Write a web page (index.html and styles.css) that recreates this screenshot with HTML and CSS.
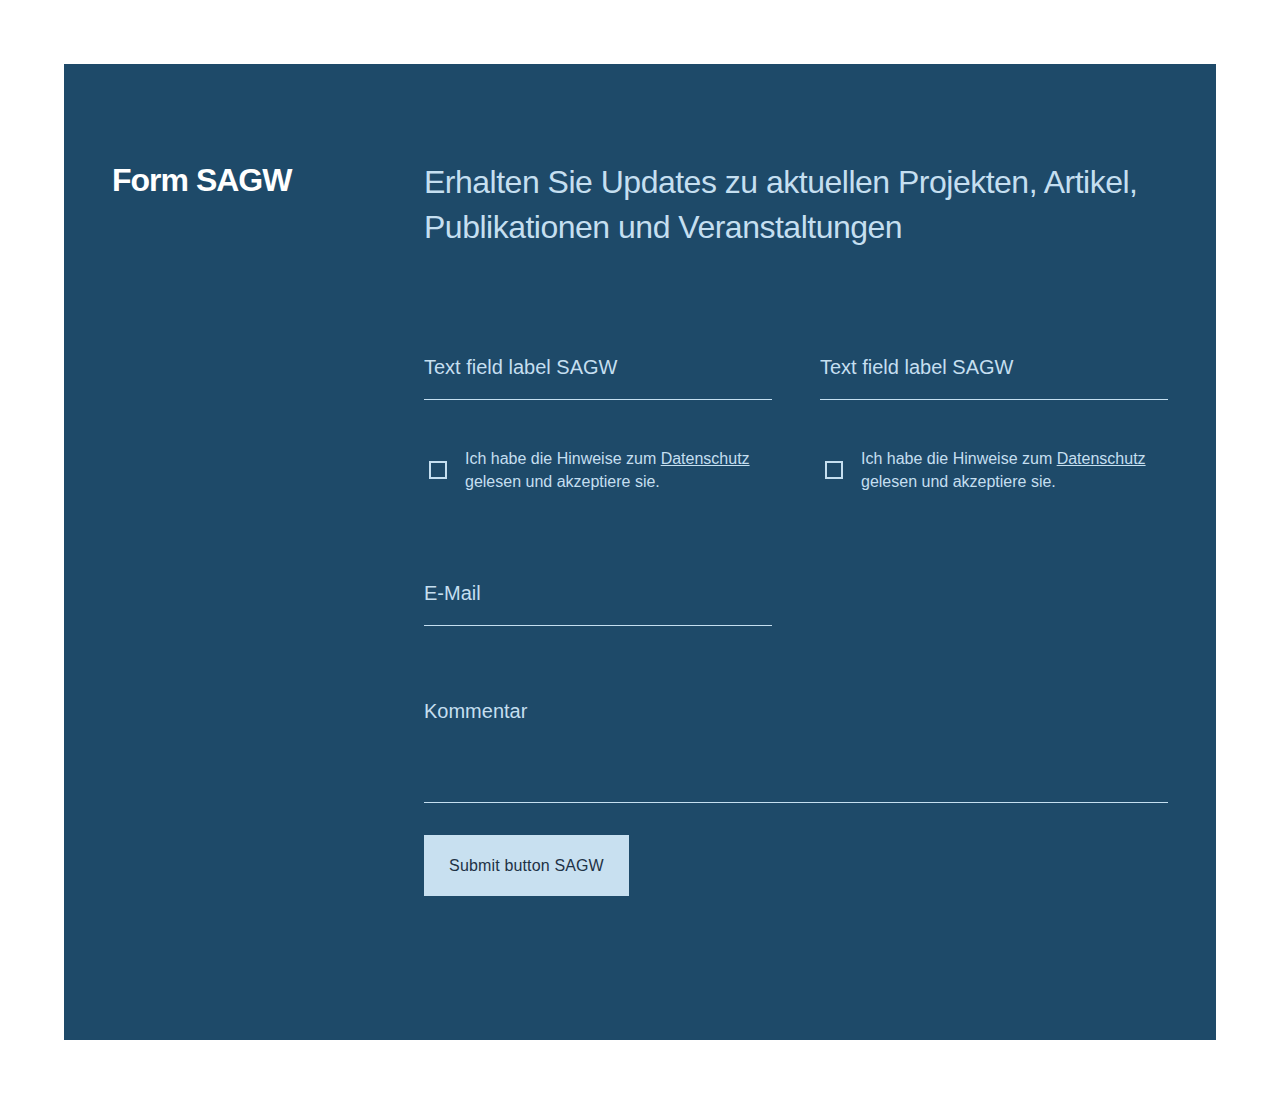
FILE: index.html
```html
<!DOCTYPE html>
<html lang="de">
<head>
<meta charset="utf-8">
<title>Form SAGW</title>
<link rel="stylesheet" href="styles.css">
</head>
<body>
<section class="panel">
  <h2 class="title">Form SAGW</h2>
  <div class="content">
    <p class="lead">Erhalten Sie Updates zu aktuellen Projekten, Artikel, Publikationen und Veranstaltungen</p>
    <form class="form">
      <div class="row two">
        <input class="field" type="text" placeholder="Text field label SAGW">
        <input class="field" type="text" placeholder="Text field label SAGW">
      </div>
      <div class="row two checks">
        <label class="check"><span class="box"></span><span class="check-text">Ich habe die Hinweise zum <a href="#">Datenschutz</a> gelesen und akzeptiere sie.</span></label>
        <label class="check"><span class="box"></span><span class="check-text">Ich habe die Hinweise zum <a href="#">Datenschutz</a> gelesen und akzeptiere sie.</span></label>
      </div>
      <div class="row two email">
        <input class="field" type="email" placeholder="E-Mail">
      </div>
      <textarea class="field area" placeholder="Kommentar"></textarea>
      <button class="submit" type="button">Submit button SAGW</button>
    </form>
  </div>
</section>
</body>
</html>
```
FILE: styles.css
```css
* { box-sizing: border-box; }
html, body { margin: 0; padding: 0; background: #ffffff; }
body { padding: 64px; font-family: "Liberation Sans", Arial, sans-serif; }

.panel {
  background: #1e4a69;
  padding: 96px 48px 144px;
  display: grid;
  grid-template-columns: 264px 1fr;
  column-gap: 48px;
  height: 976px;
}

.title {
  margin: 0;
  color: #ffffff;
  font-size: 32px;
  line-height: 40px;
  font-weight: 700;
  letter-spacing: -1px;
}

.lead {
  margin: 0;
  color: #c5dff0;
  font-size: 32px;
  line-height: 45px;
  font-weight: 400;
  letter-spacing: -0.5px;
}

.form { margin-top: 105px; display: flex; flex-direction: column; }

.row.two {
  display: grid;
  grid-template-columns: 1fr 1fr;
  column-gap: 48px;
}

.field {
  display: block;
  width: 100%;
  background: transparent;
  border: none;
  border-bottom: 1px solid #c5dff0;
  border-radius: 0;
  padding: 0 0 20px;
  margin: 0;
  font-family: "Liberation Sans", Arial, sans-serif;
  font-size: 20px;
  line-height: 24px;
  color: #c5dff0;
  outline: none;
}
.field::placeholder { color: #c5dff0; opacity: 1; }

.checks { margin-top: 47px; }

.check {
  display: flex;
  align-items: center;
  gap: 18px;
  padding-left: 5px;
  color: #c5dff0;
  font-size: 16px;
  line-height: 23px;
}
.box {
  flex: none;
  width: 18px;
  height: 18px;
  border: 2px solid #c5dff0;
}
.check-text a { color: #c5dff0; text-decoration: underline; }

.email { margin-top: 88px; }

.area {
  margin-top: 73px;
  height: 104px;
  resize: none;
  padding-bottom: 79px;
  overflow: hidden;
}

.submit {
  align-self: flex-start;
  margin-top: 32px;
  width: 205px;
  height: 61px;
  padding: 0;
  border: none;
  border-radius: 0;
  background: #c8e0f0;
  color: #1e3246;
  font-family: "Liberation Sans", Arial, sans-serif;
  font-size: 16px;
  letter-spacing: 0.15px;
  cursor: pointer;
}
```
